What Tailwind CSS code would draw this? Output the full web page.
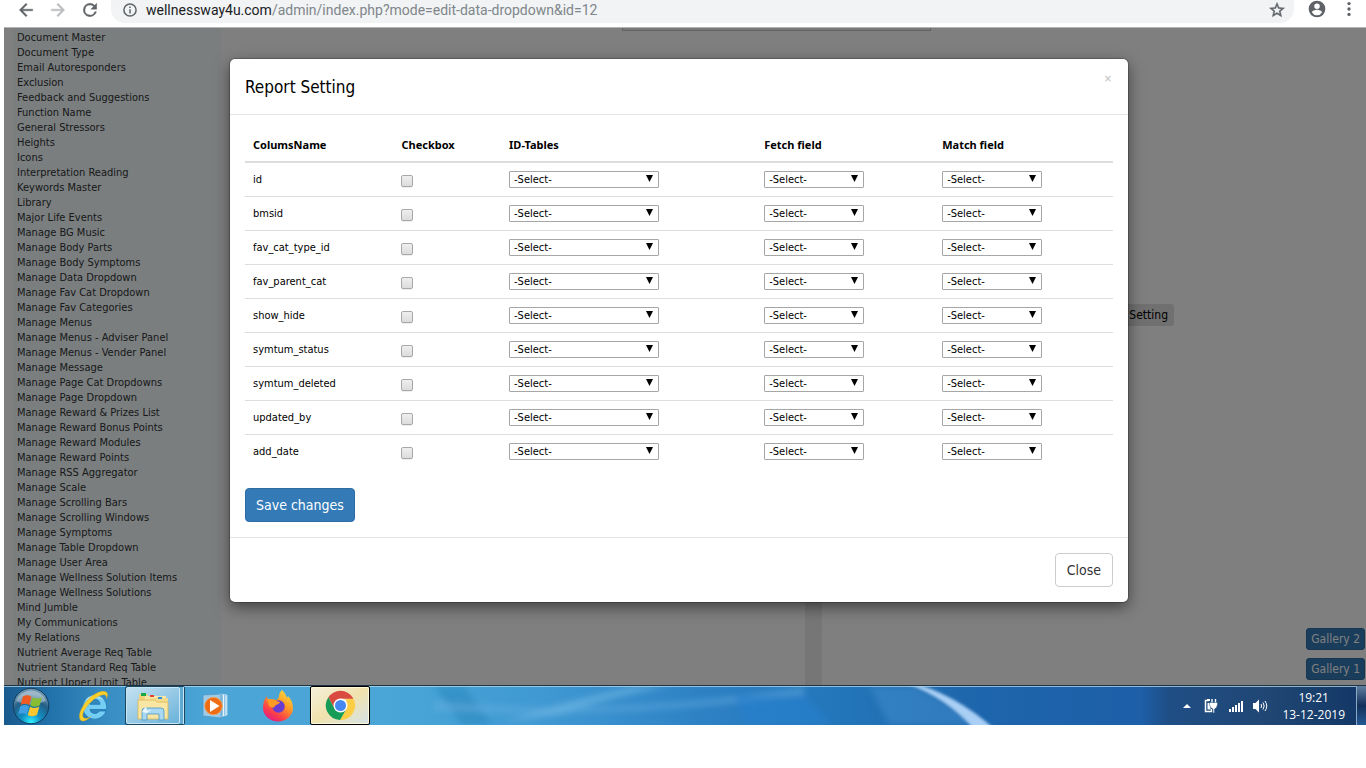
<!DOCTYPE html>
<html lang="en">
<head>
<meta charset="utf-8">
<title>Report Setting</title>
<script src="https://cdn.jsdelivr.net/npm/@tailwindcss/browser@4"></script>
</head>
<body class="flex h-screen flex-col overflow-hidden bg-white pb-[43px] font-['DejaVu_Sans_Condensed','Noto_Sans',sans-serif] text-[11px] text-black">

<!-- Browser toolbar -->
<header class="flex h-[27px] shrink-0 items-start pl-4 pr-[7px] text-[#5f6368]">
  <nav class="flex h-[19px] items-center gap-3" aria-label="Browser navigation">
    <button aria-label="Back"><svg class="h-5 w-5" viewBox="0 0 24 24" fill="currentColor" stroke="currentColor" stroke-width=".5"><path d="M20 11H7.8l5.6-5.6L12 4l-8 8 8 8 1.4-1.4L7.8 13H20z"/></svg></button>
    <button aria-label="Forward" class="text-[#babcbe]"><svg class="h-5 w-5" viewBox="0 0 24 24" fill="currentColor" stroke="currentColor" stroke-width=".5"><path d="M12 4l-1.4 1.4 5.6 5.6H4v2h12.2l-5.6 5.6L12 20l8-8z"/></svg></button>
    <button aria-label="Reload"><svg class="h-5 w-5" viewBox="0 0 24 24" fill="currentColor" stroke="currentColor" stroke-width=".5"><path d="M17.65 6.35A7.96 7.96 0 0 0 12 4a8 8 0 1 0 7.73 10h-2.08A6 6 0 1 1 12 6c1.66 0 3.14.69 4.22 1.78L13 11h7V4z"/></svg></button>
  </nav>
  <div class="ml-[11px] flex h-[23px] flex-1 items-start rounded-b-[14px] bg-[#f1f3f4] pl-3 pr-2">
    <div class="flex h-[19px] flex-1 items-center">
      <svg class="h-[14px] w-[14px] shrink-0" viewBox="0 0 14 14" fill="none" stroke="currentColor" stroke-width="1.5"><circle cx="7" cy="7" r="6.1"/><path d="M7 6.2v4.3M7 3.4v1.6"/></svg>
      <p class="ml-[9px] flex-1 whitespace-nowrap font-['Roboto','Noto_Sans',sans-serif] text-[14px] leading-5 text-[#80868b]"><span class="text-[#202124]">wellnessway4u.com</span>/admin/index.php?mode=edit-data-dropdown&amp;id=12</p>
      <button aria-label="Bookmark this page"><svg class="h-[18px] w-[18px]" viewBox="0 0 24 24" fill="currentColor" stroke="currentColor" stroke-width=".6"><path d="M22 9.24l-7.19-.62L12 2 9.19 8.63 2 9.24l5.46 4.73L5.82 21 12 17.27 18.18 21l-1.63-7.03zM12 15.4l-3.76 2.27 1-4.28-3.32-2.88 4.38-.38L12 6.1l1.71 4.04 4.38.38-3.32 2.88 1 4.28z"/></svg></button>
    </div>
  </div>
  <div class="ml-[13px] flex h-[18px] items-center gap-3">
    <button aria-label="Profile"><svg class="h-5 w-5" viewBox="0 0 24 24" fill="currentColor"><path d="M12 2a10 10 0 1 0 0 20 10 10 0 0 0 0-20zm0 3.500a3.300 3.300 0 1 1 0 6.600 3.300 3.300 0 0 1 0-6.600zm0 13.900a7 7 0 0 1-6-3.300c0-2 4-3.100 6-3.100s6 1.100 6 3.100a7 7 0 0 1-6 3.300z"/></svg></button>
    <button aria-label="Menu"><svg class="h-5 w-5" viewBox="0 0 24 24" fill="currentColor"><circle cx="12" cy="5.500" r="2"/><circle cx="12" cy="12" r="2"/><circle cx="12" cy="18.500" r="2"/></svg></button>
  </div>
</header>

<!-- Web page behind the dialog, with the dialog on top -->
<div class="relative ml-1 flex min-h-0 flex-1 overflow-hidden border-t border-[#b4b4b4] bg-white pl-[9px]">
  <aside class="w-[208px] shrink-0 overflow-hidden bg-[#f4fcff] pl-1 pt-[2px]">
    <ul id="menu"></ul>
  </aside>
  <main class="flex min-w-0 flex-1 flex-col">
    <div class="ml-[401px] h-[3px] w-[309px] shrink-0 border-x border-b-1 border-[#c4c4c4] bg-[#f2f2f2]"></div>
    <div class="mt-10 flex flex-1">
      <section class="w-[584px]"></section>
      <div class="w-[17px] bg-[#ececec]"></div>
      <section class="flex-1 pt-[233px]">
        <button class="ml-[252px] h-[22px] w-[100px] rounded-[3px] bg-[#e1e1e1] pr-[6px] text-right text-[12px]">Setting</button>
      </section>
    </div>
  </main>
  <div class="absolute bottom-[5px] right-px flex flex-col gap-2 text-[12px] text-white">
    <button class="h-[22px] rounded-[3px] border border-[#2e6da4] bg-[#337ab7] px-1">Gallery 2</button>
    <button class="h-[22px] rounded-[3px] border border-[#2e6da4] bg-[#337ab7] px-1">Gallery 1</button>
  </div>

  <div class="absolute inset-0 bg-black/50 pr-3 pt-[31px]">
    <div role="dialog" aria-labelledby="dialog-title" class="mx-auto max-w-[898px] rounded-[5px] bg-white shadow-[0_5px_15px_rgba(0,0,0,0.5),0_0_0_1px_rgba(0,0,0,0.2)]">
      <div class="flex h-14 items-start justify-between border-b border-[#e5e5e5] p-[15px]">
        <h4 id="dialog-title" class="text-[17px] leading-[26px]">Report Setting</h4>
        <button aria-label="Close dialog" class="pr-px text-[11px] leading-[10px] font-bold text-[#ccc]">×</button>
      </div>
      <form class="p-[15px]">
        <table class="mb-5 w-full table-fixed border-collapse text-left">
          <colgroup><col class="w-[17.1%]"><col class="w-[12.4%]"><col class="w-[29.400%]"><col class="w-[20.500%]"><col></colgroup>
          <thead>
            <tr class="h-8 border-b-2 border-[#ddd] font-['Noto_Sans',sans-serif]">
              <th class="pl-2">ColumsName</th><th class="pl-2">Checkbox</th><th class="pl-2">ID-Tables</th><th class="pl-2">Fetch field</th><th class="pl-2">Match field</th>
            </tr>
          </thead>
          <tbody id="rows"></tbody>
        </table>
        <button type="button" class="block h-[34px] rounded-[4px] border border-[#2e6da4] bg-[#337ab7] px-[10px] text-[14px] text-white">Save changes</button>
      </form>
      <div class="flex justify-end border-t border-[#e5e5e5] p-[15px]">
        <button class="h-[34px] rounded-[4px] border border-[#ccc] bg-white px-[11px] text-[14px] text-[#333]">Close</button>
      </div>
    </div>
  </div>
</div>

<!-- Windows taskbar -->
<footer class="relative ml-1 flex h-10 shrink-0 overflow-hidden border-t border-[#1d3445] bg-[#2a80c0] text-white">
  <svg class="absolute inset-0 h-full w-full" viewBox="0 0 1362 39" preserveAspectRatio="none" aria-hidden="true">
    <defs>
      <linearGradient id="sky"><stop offset="0" stop-color="#195a8e"/><stop offset=".035" stop-color="#2272ab"/><stop offset=".08" stop-color="#3a90c4"/><stop offset=".15" stop-color="#4ba5d6"/><stop offset=".28" stop-color="#4aa6d7"/><stop offset=".4" stop-color="#3f98d2"/><stop offset=".52" stop-color="#2c80c3"/><stop offset=".62" stop-color="#2275b9"/><stop offset=".67" stop-color="#216cb0"/><stop offset=".72" stop-color="#1d65ac"/><stop offset=".835" stop-color="#1d5fa8"/><stop offset=".855" stop-color="#1f4e85"/><stop offset=".93" stop-color="#204673"/><stop offset="1" stop-color="#123766"/></linearGradient>
      <filter id="soft" x="-20%" y="-50%" width="140%" height="200%"><feGaussianBlur stdDeviation="3"/></filter>
      <filter id="edge" x="-20%" y="-50%" width="140%" height="200%"><feGaussianBlur stdDeviation="1.500"/></filter>
    </defs>
    <rect width="1362" height="39" fill="url(#sky)"/>
    <g filter="url(#soft)">
      <path d="M430 0h30l28 39h-30z" fill="#2b86bd" opacity=".55"/>
      <path d="M500 36Q560 15 630 0h35Q600 12 560 28z" fill="#79bbe6" opacity=".55"/>
      <path d="M430 16Q610 32 800 0v9Q620 34 430 24z" fill="#6db4e4" opacity=".4"/>
      <path d="M730 9h70l28 30h-85z" fill="#2a80ce" opacity=".6"/>
      <path d="M865 0h45l70 39h-95z" fill="#3a88ca" opacity=".6"/>
    </g>
    <path d="M902 -4Q950 8 990 44h-18Q945 12 902 -4z" fill="#a9cff5" stroke="#a9cff5" stroke-width="2" filter="url(#edge)"/>
    <rect width="1362" height="1" fill="#b8d8ea" opacity=".75"/>
  </svg>

  <div class="relative flex flex-1 items-center pl-2">
    <button aria-label="Start"><svg class="h-[38px] w-[38px]" viewBox="0 0 38 38">
      <defs><radialGradient id="orb" cx=".5" cy=".95" r=".8"><stop offset="0" stop-color="#2ff0ff"/><stop offset=".35" stop-color="#118fc4"/><stop offset=".75" stop-color="#235f87"/><stop offset="1" stop-color="#6b93ad"/></radialGradient></defs>
      <circle cx="19" cy="19" r="17.800" fill="url(#orb)" stroke="#123c5c" stroke-width="1"/>
      <path d="M4 14a16 16 0 0 1 30 0Q19 21 4 14z" fill="#fff" opacity=".35"/>
      <path d="M10.800 9.500c3.500-2 6-1.700 8.700.2l-2.200 8.300c-3-1.700-5.500-1.700-8.700 0z" fill="#ef5a22"/>
      <path d="M20.500 10.300c3.500 1.700 6 1.700 9.500-.3l-2.300 8.300c-3.500 1.900-6 1.900-9.400.2z" fill="#86bd33"/>
      <path d="M8.300 19.300c3.500-2 6-1.700 8.700 0l-2.200 8.200c-3-1.700-5.500-1.700-8.700 0z" fill="#3f9ee4"/>
      <path d="M18 19.700c3.500 1.700 6 1.700 9.400-.2l-2.300 8.300c-3.500 1.900-6 1.900-9.300.2z" fill="#fcc62e"/>
    </svg></button>
    <button aria-label="Internet Explorer" class="ml-7"><svg class="h-8 w-8" viewBox="0 0 32 32">
      <path d="M28.500 19.500H12a5 5 0 0 0 9.300 1.500h6.800A12 12 0 1 1 28.500 19.500zM12 14.300h10a5 5 0 0 0-10 0z" fill="#74cdf3" stroke="#1c78b4" stroke-width=".8" fill-rule="evenodd"/>
      <path d="M7 11a11 11 0 0 1 19-1Q17 6 7 11z" fill="#c4edfc" opacity=".6"/>
      <path d="M3 30.500C-2.500 26 7 8 20 2.500c8-3 11.500 0 8.500 6 .5-5-3.500-4.500-8.500-2C9.500 13 1.500 25 6 28c2 1 4.500 0 7-1.500-3.500 3.500-7.500 5.500-10 4z" fill="#fbcf2b" stroke="#d9a414" stroke-width=".4"/>
    </svg></button>
    <div class="ml-[15px] flex h-[39px] items-center rounded-[2px] border border-[#1b4660]">
      <button aria-label="File Explorer" class="flex h-full w-[54px] items-center justify-center rounded-[2px] border border-[#c9e6f5] bg-linear-to-br from-[#c4e1f0] to-[#68b2da]"><svg class="h-8 w-8" viewBox="0 0 32 32">
        <path d="M2 4h8l1 2h18v4H2z" fill="#efd27a"/><path d="M4 3h5v3H4z" fill="#17a84b"/><path d="M8 6h21v5H8z" fill="#f7e6a8"/><path d="M13 5h4v2h-4z" fill="#e4432d"/><path d="M13 8h18v5H13z" fill="#f4dc8e"/><path d="M21 7h4v2h-4z" fill="#2f8fd8"/>
        <path d="M1 10h17l2 2h11v17H1z" fill="#f8e6a2" stroke="#d9b556" stroke-width=".8"/>
        <path d="M5 30V21q0-3 3-3h16q3 0 3 3v9h-5v-6H10v6z" fill="#a8d8f2" stroke="#4a97c6" stroke-width=".8"/>
        <path d="M5 22l4-6 1 5 5-2-5 4z" fill="#fff" opacity=".8"/>
      </svg></button>
      <span class="h-full w-1 border-r border-[#c9e6f5] bg-[#5fa9d0]"></span>
    </div>
    <button aria-label="Media Player" class="ml-[17px]"><svg class="h-7 w-7" viewBox="0 0 28 28">
      <path d="M17 2l8 1v20l-8 2z" fill="#8dc3e4" stroke="#d6ebf7" stroke-width=".7"/><path d="M1 3l18-1v24L1 24z" fill="#9ccbe8" stroke="#4c97c6" stroke-width=".7"/><path d="M21.500 3v21M24 4v19" stroke="#e6f4fb"/>
      <circle cx="11.500" cy="14" r="8.800" fill="#ef6c14" stroke="#f9a65c" stroke-width=".8"/><path d="M8 8l9.500 6L8 20z" fill="#fff"/>
    </svg></button>
    <button aria-label="Firefox" class="ml-8"><svg class="h-8 w-8" viewBox="0 0 32 32">
      <defs><linearGradient id="fox" x1=".85" y1="0" x2=".2" y2="1"><stop offset="0" stop-color="#ffe444"/><stop offset=".4" stop-color="#ff9a25"/><stop offset=".75" stop-color="#fb3c4b"/><stop offset="1" stop-color="#dc1792"/></linearGradient></defs>
      <path d="M20 0c3 3 4 5 5 8l1-2c3 3 5 7 5 12a15 13.500 0 0 1-30 0c0-5 1-8 4-12 0 2 .5 3 1.500 3.500C9 9 12 9.500 14 10c2-1 3-2 3-4 0-2 1-4 3-6z" fill="url(#fox)"/>
      <circle cx="16.500" cy="16.500" r="6.200" fill="#6a3bd0"/><path d="M5 9c4 0 8 0 9 2l4 1c-1 3-4 2-5 4-1 2-2 2-3 1-2 1-4-2-5-8z" fill="#ff9a25"/>
    </svg></button>
    <button aria-label="Chrome" class="ml-4 flex h-[39px] w-[60px] items-center justify-center rounded-[2px] border border-black bg-linear-to-br from-[#f4efdc] via-[#f0e2ac] to-[#d5e2e8] shadow-[inset_0_0_0_1px_#fff7dc]"><svg class="h-[31px] w-[31px]" viewBox="0 0 32 32">
      <path d="M29 8.500A15 15 0 0 1 15.500 31L22 19.500V9z" fill="#fdcd45"/>
      <path d="M16 9h13.200l-.5-1A15 15 0 0 0 3.500 7.500L10 19.500z" fill="#d94b41"/><path d="M3.500 7.500A15 15 0 0 0 15.500 31L22 19.500H10z" fill="#179c58"/>
      <circle cx="16" cy="16" r="7.200" fill="#fff"/><circle cx="16" cy="16" r="5.700" fill="#4688f1"/>
    </svg></button>
  </div>

  <div class="relative flex items-center">
    <button aria-label="Show hidden icons"><svg class="h-3 w-3" viewBox="0 0 12 12"><path d="M2 8l4-4 4 4z" fill="#fff"/></svg></button>
    <svg class="ml-[10px] h-4 w-4" viewBox="0 0 16 16" role="img" aria-label="Power"><path d="M6 2.500H2.500v11h6V11" fill="none" stroke="#fff" stroke-width="1.500"/><path d="M4 1h3v2H4zM4.500 5v6.500h3V5z" fill="#fff"/><path d="M9 1v4M12.500 1v4" stroke="#fff" stroke-width="1.400"/><path d="M6.500 4.500h8v2l-1 3-2 1.500v4H10v-4l-2.500-1.500-1-3z" fill="#fff" stroke="#1f4a7c" stroke-width=".5"/></svg>
    <svg class="ml-[9px] h-4 w-4" viewBox="0 0 16 16" fill="#fff" role="img" aria-label="Network"><path d="M1 11h2v3H1zM4 9h2v5H4zM7 7h2v7H7zM10 5h2v9h-2zM13 3h2v11h-2z"/></svg>
    <svg class="ml-2 h-4 w-4" viewBox="0 0 16 16" role="img" aria-label="Volume"><path d="M1 5h2.500L7 1.500v13L3.500 11H1z" fill="#fff"/><path d="M9 6q1.200 2 0 4M11 4.500q2.400 3.500 0 7M13 3q3.600 5 0 10" fill="none" stroke="#fff"/></svg>
    <time class="ml-[14px] mr-[11px] text-center font-['Open_Sans',sans-serif] text-[12px] leading-[17px]">19:21<br>13-12-2019</time>
    <button aria-label="Show desktop" class="h-full w-[10px] border-l border-[#8ba9c4] bg-linear-to-b from-[#5f7f9f] via-[#12305a] to-[#245a94]"></button>
  </div>
</footer>

<script>
const items = ["Document Master","Document Type","Email Autoresponders","Exclusion","Feedback and Suggestions","Function Name","General Stressors","Heights","Icons","Interpretation Reading","Keywords Master","Library","Major Life Events","Manage BG Music","Manage Body Parts","Manage Body Symptoms","Manage Data Dropdown","Manage Fav Cat Dropdown","Manage Fav Categories","Manage Menus","Manage Menus - Adviser Panel","Manage Menus - Vender Panel","Manage Message","Manage Page Cat Dropdowns","Manage Page Dropdown","Manage Reward & Prizes List","Manage Reward Bonus Points","Manage Reward Modules","Manage Reward Points","Manage RSS Aggregator","Manage Scale","Manage Scrolling Bars","Manage Scrolling Windows","Manage Symptoms","Manage Table Dropdown","Manage User Area","Manage Wellness Solution Items","Manage Wellness Solutions","Mind Jumble","My Communications","My Relations","Nutrient Average Req Table","Nutrient Standard Req Table","Nutrient Upper Limit Table"];
document.getElementById("menu").innerHTML = items.map(t => `<li class="h-[15px] whitespace-nowrap leading-[15px]"><a href="#" class="text-[#333]">${t.replace("&", "&amp;")}</a></li>`).join("");

const select = (label, width) => `<td class="pl-2 pt-2 align-top"><span class="relative block h-[17px] ${width}"><select aria-label="${label}" class="block h-[17px] w-full appearance-none rounded-[1px] border border-[#a6a6a6] bg-white pl-1 leading-[15px]"><option>-Select-</option></select><svg class="pointer-events-none absolute right-[6px] top-1 h-[7px] w-[7px]" viewBox="0 0 7 7" aria-hidden="true"><path d="M0 0h7L3.500 7z"/></svg></span></td>`;
const columns = ["id","bmsid","fav_cat_type_id","fav_parent_cat","show_hide","symtum_status","symtum_deleted","updated_by","add_date"];
document.getElementById("rows").innerHTML = columns.map(c => `<tr class="h-[34px] border-t border-[#ddd] first:border-t-2"><td class="pl-2 pt-[9px] align-top leading-4"><label for="use-${c}">${c}</label></td><td class="pl-2 pt-3 align-top"><input id="use-${c}" type="checkbox" class="block h-3 w-3 appearance-none rounded-[2px] border border-[#a8a8a8] bg-linear-to-b from-[#efefef] to-[#dcdcdc] shadow-[0_1px_0_#eee]"></td>${select(c + " ID table", "w-[150px]")}${select(c + " fetch field", "w-[100px]")}${select(c + " match field", "w-[100px]")}</tr>`).join("");
</script>
</body>
</html>
